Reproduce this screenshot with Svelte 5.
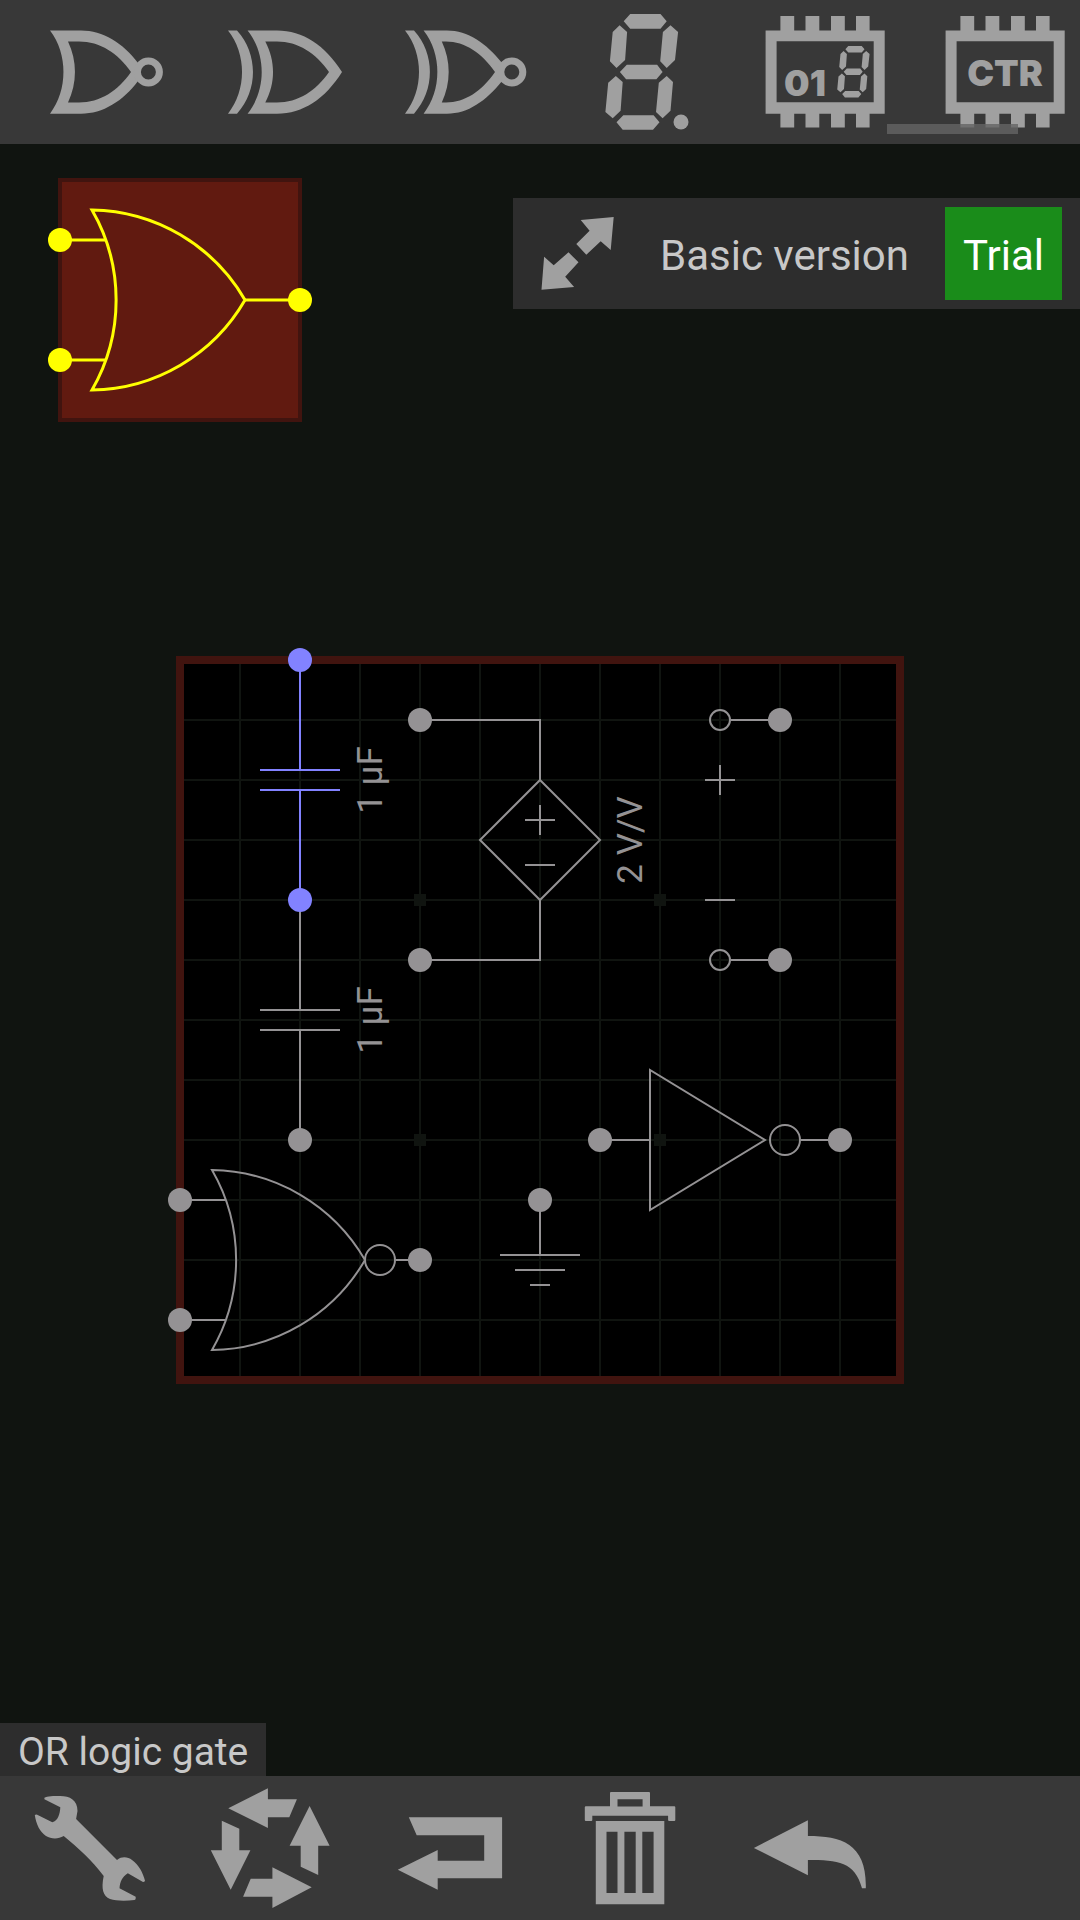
<script>
  const digit = [
    'M68.7 21.3L75.2 14H105.5L111.7 21.3L105.5 28.7H75.2Z',
    'M64.9 72L71.8 64.7H102.1L107.6 72L101.4 79.3H71.1Z',
    'M61.5 122.3L68.3 115.3H98.6L104.5 122.3L98 129.7H67.7Z',
    'M64.6 25.3L72.1 32L70.1 60L61.5 68L54.9 61.3L57.7 32Z',
    'M115.5 25.3L123.1 32L120 60L111.7 68L105.2 61.3L107.9 32Z',
    'M60.8 76L67.7 82L65.6 110.7L57.7 118.3L50.4 112L53.2 82.7Z',
    'M111.7 76L118 82L115.5 110.7L107.6 118.3L101 112L103.8 82.7Z'
  ].join('');

  const chip =
    'M30.6 30.5H45.4V16H59.2V30.5H70.5V16H84.3V30.5H96V16H109.8V30.5H121V16H134.6V30.5H149.7V113.7' +
    'H134.6V127.5H121V113.7H109.8V127.5H96V113.7H84.3V127.5H70.5V113.7H59.2V127.5H45.4V113.7H30.6Z' +
    'M41.6 41.3V102.3H138.7V41.3Z';

  const parts = [
    {
      name: 'NOR logic gate',
      path: 'M35 30.5H66C88 30.5 108 43 123 63V81C108 101 88 113.7 66 113.7H35C53 90 53 54 35 30.5ZM53 41.5H64C85 41.5 103 53 116 72C103 91 85 102.5 64 102.5H53C62.3 83 62.3 61 53 41.5Z',
      bubble: 133.4
    },
    {
      name: 'XOR logic gate',
      path: 'M33 30.5H42C63.3 54 63.3 90 42 113.7H33C51.7 90 51.7 54 33 30.5ZM52.6 30.5H82C108 30.5 130 45 147 72C130 99 108 113.7 82 113.7H52.6C71.4 90 71.4 54 52.6 30.5ZM70.3 41.5H82C103 41.5 121 53 134 72C121 91 103 102.5 82 102.5H70.3C80.6 83 80.6 61 70.3 41.5Z'
    },
    {
      name: 'XNOR logic gate',
      path: 'M30 30.5H39C60.3 54 60.3 90 39 113.7H30C48.7 90 48.7 54 30 30.5ZM48.6 30.5H72C93 30.5 111 43 127 63V81C111 101 93 113.7 72 113.7H48.6C67 90 67 54 48.6 30.5ZM66.8 41.5H71C90 41.5 107 53 120 72C107 91 90 102.5 71 102.5H66.8C76 83 76 61 66.8 41.5Z',
      bubble: 136.8
    },
    { name: 'Seven-segment display', path: digit, dot: true },
    { name: 'Seven-segment decoder', path: chip, text: '01', tx: 70, ty: 96, small: true },
    { name: 'Counter', path: chip, text: 'CTR', tx: 90, ty: 86 }
  ];

  const actions = [
    {
      name: 'Settings',
      path: 'M44.4 21.7C47 20 54 20 60 20C70 20 77.5 24 77.5 35L76.1 43L117 84C122 80 128 81 132 84C139 89 143 97 145 104.7Q144.5 106 143 106L127.8 97.3C122 101 120 106 119.5 112.3L135.7 120.7Q136 124 134.3 124C126 125 116 125 110 123C103 120 101 113 103.7 100C92 84 78 72 63.7 60C58 63.5 51 63 46 60C40 56 36 48 34.8 39Q36 38.2 37.2 38.7L52.3 46.3C58 45 60 38 60.3 31.3L44.4 23.3Z'
    },
    {
      name: 'Rotate',
      path: 'M48.3 32.3L87.9 12.3V23.3H116.9L109.3 41.3H87.9V52ZM129.6 30L149.6 69.7H138.2V99L120.7 90.7V69.7H109.6ZM41.8 44.7L59.3 52.7V74.3H70.4L50.7 113.7L30.8 74.3H41.8ZM131.7 111.3L92.4 132V120.7H63.1L70.7 102.7H92.4V91.3Z'
    },
    {
      name: 'Flip',
      path: 'M48.8 41.3H142.1V102.3H77.7V113.7L37.8 93.7L77.7 74V84.7H124.2V59.3H56.7Z'
    },
    {
      name: 'Delete',
      path: 'M70 17Q70 16 71 16H109Q110 16 110 17V30.3H134.3Q135.3 30.3 135.3 31.3V44Q135.3 45 134.3 45H129.1Q128.1 45 128.1 44V39.7H52.3V44Q52.3 45 51.3 45H45.8Q44.8 45 44.8 44V31.3Q44.8 30.3 45.8 30.3H70ZM77.5 23.3V30.5H102.6V23.3ZM55.8 45H124.3V128.3H55.8ZM66.5 55.7V117H77.5V55.7ZM84.4 55.7V117H95.7V55.7ZM102.3 55.7V117H113.6V55.7Z'
    },
    {
      name: 'Undo',
      path: 'M33.9 72L87.9 44.3V60C122 60 147 68 145.8 112.3H142C135 86 118 84 87.9 84V99.3Z'
    }
  ];

  const lines = [240, 300, 360, 420, 480, 540, 600, 660, 720, 780, 840];
  const marks = [[420, 900], [660, 900], [420, 1140], [660, 1140]];
  const pins = [
    [420, 720], [420, 960], [780, 720], [780, 960], [300, 1140], [600, 1140],
    [840, 1140], [540, 1200], [180, 1200], [180, 1320], [420, 1260]
  ];
</script>

<div class="app">
  <header class="bar parts">
    {#each parts as part}
      <button class="tool" aria-label={part.name}>
        <svg class="icon" viewBox="0 0 180 144">
          <path d={part.path} fill-rule="evenodd" />
          {#if part.bubble}
            <circle class="bubble" cx={part.bubble} cy="72" r="11" />
          {/if}
          {#if part.dot}
            <circle cx="126" cy="122" r="7.5" />
          {/if}
          {#if part.small}
            <path d={digit} transform="translate(79.8 39.7) scale(.445)" />
          {/if}
          {#if part.text}
            <text class="chip-text" x={part.tx} y={part.ty}>{part.text}</text>
          {/if}
        </svg>
      </button>
    {/each}
    <div class="thumb"></div>
  </header>

  <main class="stage">
    <svg class="canvas" viewBox="0 144 1080 1632" role="img" aria-label="Circuit">
      <rect class="board" x="180" y="660" width="720" height="720" />
      <g class="grid">
        {#each lines as at}
          <path d="M{at} 664V1376M184 {at + 480}H896" />
        {/each}
      </g>
      <g class="marks">
        {#each marks as [x, y]}
          <rect x={x - 6} y={y - 6} width="12" height="12" />
        {/each}
      </g>
      <rect class="frame" x="180" y="660" width="720" height="720" />

      <g class="wire">
        <path d="M300 900V1010M260 1010H340M260 1030H340M300 1030V1140" />
        <path d="M420 720H540V780L480 840L540 900L600 840L540 780M540 900V960H420" />
        <path d="M525 820H555M540 805V835M525 865H555" />
        <circle cx="720" cy="720" r="10" />
        <circle cx="720" cy="960" r="10" />
        <path d="M731 720H780M731 960H780M705 780H735M720 765V795M705 900H735" />
        <path d="M600 1140H650M650 1070V1210L765 1140ZM801 1140H840" />
        <circle cx="785" cy="1140" r="15" />
        <path d="M540 1200V1255M500 1255H580M515 1270H565M530 1285H550" />
        <path d="M180 1200H225M180 1320H225M396 1260H420" />
        <path d="M212 1170A180 180 0 0 1 365 1260A180 180 0 0 1 212 1350A180 180 0 0 0 212 1170Z" />
        <circle cx="380" cy="1260" r="15" />
      </g>
      <g class="pins">
        {#each pins as [x, y]}
          <circle cx={x} cy={y} r="12" />
        {/each}
      </g>
      <g class="value">
        <text transform="translate(382 780) rotate(-90)">1 µF</text>
        <text transform="translate(382 1020) rotate(-90)">1 µF</text>
        <text transform="translate(642 840) rotate(-90)">2 V/V</text>
      </g>

      <g class="active">
        <path d="M300 660V770M260 770H340M260 790H340M300 790V900" />
        <circle cx="300" cy="660" r="12" />
        <circle cx="300" cy="900" r="12" />
      </g>

      <g class="selected">
        <rect x="60" y="180" width="240" height="240" />
        <path d="M60 240H105M60 360H105M245 300H300" />
        <path d="M92 210A180 180 0 0 1 245 300A180 180 0 0 1 92 390A180 180 0 0 0 92 210Z" />
        <circle cx="60" cy="240" r="12" />
        <circle cx="60" cy="360" r="12" />
        <circle cx="300" cy="300" r="12" />
      </g>
    </svg>

    <div class="version">
      <button class="expand" aria-label="Full screen">
        <svg class="icon" viewBox="0 0 93 93">
          <path d="M82.7 10L79.7 43L69.7 34.3L55.3 47.7L45.3 37L58.6 23.7L49.7 13ZM10.5 82.7L13.1 49.7L22.7 58.3L37.5 45.3L47.5 55.3L34.2 69.7L43.1 80Z" />
        </svg>
      </button>
      <span class="edition">Basic version</span>
      <button class="trial">Trial</button>
    </div>

    <div class="hint">OR logic gate</div>
  </main>

  <footer class="bar">
    {#each actions as action}
      <button class="tool" aria-label={action.name}>
        <svg class="icon" viewBox="0 0 180 144">
          <path d={action.path} fill-rule="evenodd" />
        </svg>
      </button>
    {/each}
  </footer>
</div>

<style>
  :global(body) {
    margin: 0;
    background: #101410;
  }

  .app {
    display: flex;
    flex-direction: column;
    min-height: 100vh;
    font-family: Roboto, "Liberation Sans", sans-serif;
  }

  button {
    margin: 0;
    padding: 0;
    border: 0;
    background: none;
    font: inherit;
    cursor: pointer;
  }

  .bar {
    position: relative;
    display: flex;
    overflow: hidden;
    background: #383838;
  }

  .parts {
    padding-left: 15px;
  }

  .tool {
    flex: 0 0 180px;
    height: 144px;
  }

  .icon {
    display: block;
    width: 100%;
    height: 100%;
    fill: #a0a0a0;
  }

  .bubble {
    fill: #383838;
    stroke: #a0a0a0;
    stroke-width: 7px;
  }

  .chip-text {
    font-family: Inter, "Liberation Sans", sans-serif;
    font-size: 36px;
    font-weight: 900;
    text-anchor: middle;
  }

  .thumb {
    position: absolute;
    right: 62px;
    bottom: 10px;
    width: 131px;
    height: 10px;
    background: rgba(100, 100, 100, 0.8);
  }

  .stage {
    position: relative;
    flex: 1;
    min-height: 600px;
    background: #101410;
  }

  .canvas {
    position: absolute;
    inset: 0;
    width: 100%;
    height: 100%;
  }

  .board {
    fill: #000;
  }

  .grid {
    stroke: #101410;
    stroke-width: 2px;
  }

  .marks {
    fill: #101410;
  }

  .frame {
    fill: none;
    stroke: #41140f;
    stroke-width: 8px;
  }

  .wire {
    fill: none;
    stroke: #949294;
    stroke-width: 2px;
  }

  .pins,
  .value {
    fill: #949294;
  }

  .value {
    font-size: 35px;
    text-anchor: middle;
  }

  .active {
    fill: #8282ff;
    stroke: none;
  }

  .active path {
    fill: none;
    stroke: #8282ff;
    stroke-width: 2px;
  }

  .selected {
    fill: #ff0;
  }

  .selected rect {
    fill: #611a10;
    stroke: #41140f;
    stroke-width: 4px;
  }

  .selected path {
    fill: none;
    stroke: #ff0;
    stroke-width: 3px;
  }

  .version {
    position: absolute;
    top: 54px;
    right: 0;
    display: flex;
    align-items: center;
    padding: 9px 18px;
    background: #2d2d2d;
    color: #c8c8c8;
    font-size: 42px;
    white-space: nowrap;
  }

  .expand {
    width: 93px;
    height: 93px;
  }

  .edition {
    padding: 4px 36px 0;
  }

  .trial {
    height: 93px;
    padding: 4px 18px 0;
    background: #1a8c1a;
    color: #fff;
  }

  .hint {
    position: absolute;
    bottom: 0;
    left: 0;
    padding: 5px 18px 0;
    background: #2d2d2d;
    color: #c8c8c8;
    font-size: 39px;
    line-height: 48px;
  }
</style>
